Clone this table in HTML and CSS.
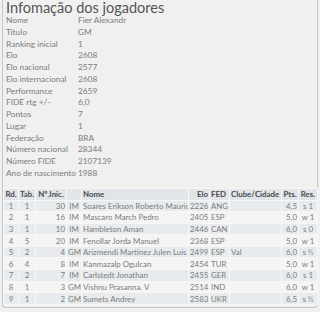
FILE: index.html
```html
<!DOCTYPE html>
<html>
<head>
<meta charset="utf-8">
<link rel="stylesheet" href="styles.css">
</head>
<body>
<div class="panel">
  <h1 class="title">Infomação dos jogadores</h1>
  <div class="info">
    <div class="k">Nome</div><div class="v">Fier Alexandr</div>
    <div class="k">Título</div><div class="v">GM</div>
    <div class="k">Ranking inicial</div><div class="v">1</div>
    <div class="k">Elo</div><div class="v">2608</div>
    <div class="k">Elo nacional</div><div class="v">2577</div>
    <div class="k">Elo internacional</div><div class="v">2608</div>
    <div class="k">Performance</div><div class="v">2659</div>
    <div class="k">FIDE rtg +/-</div><div class="v">6,0</div>
    <div class="k">Pontos</div><div class="v">7</div>
    <div class="k">Lugar</div><div class="v">1</div>
    <div class="k">Federação</div><div class="v">BRA</div>
    <div class="k">Número nacional</div><div class="v">28344</div>
    <div class="k">Número FIDE</div><div class="v">2107139</div>
    <div class="k">Ano de nascimento</div><div class="v">1988</div>
  </div>
  <table class="games">
    <colgroup>
      <col class="c-rd"><col class="c-tab"><col class="c-ini"><col class="c-tit"><col class="c-nome"><col class="c-elo"><col class="c-fed"><col class="c-club"><col class="c-pts"><col class="c-res">
    </colgroup>
    <thead>
      <tr><th>Rd.</th><th>Tab.</th><th>Nº.Inic.</th><th></th><th class="l">Nome</th><th class="r">Elo</th><th class="l">FED</th><th class="l">Clube/Cidade</th><th>Pts.</th><th>Res.</th></tr>
    </thead>
    <tbody>
      <tr><td>1</td><td>1</td><td class="r">30</td><td>IM</td><td class="l">Soares Erikson Roberto Mauric</td><td class="r">2226</td><td class="l">ANG</td><td></td><td class="r">4,5</td><td>s 1</td></tr>
      <tr><td>2</td><td>1</td><td class="r">16</td><td>IM</td><td class="l">Mascaro March Pedro</td><td class="r">2405</td><td class="l">ESP</td><td></td><td class="r">5,0</td><td>w 1</td></tr>
      <tr><td>3</td><td>1</td><td class="r">10</td><td>IM</td><td class="l">Hambleton Aman</td><td class="r">2446</td><td class="l">CAN</td><td></td><td class="r">6,0</td><td>s 0</td></tr>
      <tr><td>4</td><td>5</td><td class="r">20</td><td>IM</td><td class="l">Fenollar Jorda Manuel</td><td class="r">2368</td><td class="l">ESP</td><td></td><td class="r">5,0</td><td>w 1</td></tr>
      <tr><td>5</td><td>2</td><td class="r">4</td><td>GM</td><td class="l">Arizmendi Martinez Julen Luis</td><td class="r">2499</td><td class="l">ESP</td><td class="l">Val</td><td class="r">6,0</td><td>s ½</td></tr>
      <tr><td>6</td><td>4</td><td class="r">8</td><td>IM</td><td class="l">Kanmazalp Ogulcan</td><td class="r">2454</td><td class="l">TUR</td><td></td><td class="r">5,0</td><td>w 1</td></tr>
      <tr><td>7</td><td>2</td><td class="r">7</td><td>IM</td><td class="l">Carlstedt Jonathan</td><td class="r">2455</td><td class="l">GER</td><td></td><td class="r">6,0</td><td>s 1</td></tr>
      <tr><td>8</td><td>1</td><td class="r">3</td><td>GM</td><td class="l">Vishnu Prasanna. V</td><td class="r">2514</td><td class="l">IND</td><td></td><td class="r">6,0</td><td>w 1</td></tr>
      <tr><td>9</td><td>1</td><td class="r">2</td><td>GM</td><td class="l">Sumets Andrey</td><td class="r">2583</td><td class="l">UKR</td><td></td><td class="r">6,5</td><td>s ½</td></tr>
    </tbody>
  </table>
</div>
</body>
</html>
```
FILE: styles.css
```css
html, body {
  margin: 0;
  padding: 0;
  background: #f0f0f0;
}
body {
  font-family: "Lato", "Liberation Sans", sans-serif;
  color: #7c7c7c;
  width: 320px;
  height: 312px;
  overflow: hidden;
}
.panel {
  margin: 0 2px;
  height: 308px;
  box-sizing: border-box;
  border: 1px solid #c6c6c6;
  border-top: none;
  border-radius: 0 0 4px 4px;
}
.title {
  margin: 0;
  padding: 0 0 0 3px;
  font-size: 14.5px;
  line-height: 16px;
  font-weight: normal;
  color: #555;
}
.info {
  display: grid;
  grid-template-columns: 72px 1fr;
  grid-auto-rows: 11.75px;
  padding: 0 0 0 3px;
  margin-top: -1px;
  font-size: 8.3px;
  line-height: 11.75px;
  white-space: nowrap;
}
.games {
  margin-top: 8px;
  width: 314px;
  table-layout: fixed;
  border-collapse: collapse;
  font-size: 7.9px;
  color: #7c7c7c;
}
.c-rd { width: 15px; }
.c-tab { width: 17px; }
.c-ini { width: 31px; }
.c-tit { width: 15px; }
.c-nome { width: 107px; }
.c-elo { width: 21px; }
.c-fed { width: 20px; }
.c-club { width: 52px; }
.c-pts { width: 17px; }
.c-res { width: 19px; }
.games th, .games td {
  border: 1px solid #f7f7f7;
  padding: 0 1px;
  white-space: nowrap;
  overflow: hidden;
  text-align: center;
  line-height: 10px;
}
.games thead tr { height: 12px; }
.games tbody tr { height: 11.6px; }
.games th {
  background: #e1e5ea;
  color: #4a4a4a;
  font-weight: bold;
}
.games tbody tr:nth-child(odd) td { background: #e8ebee; }
.games tbody tr:nth-child(even) td { background: #f4f4f4; }
.games .l { text-align: left; }
.games .r { text-align: right; }
```
